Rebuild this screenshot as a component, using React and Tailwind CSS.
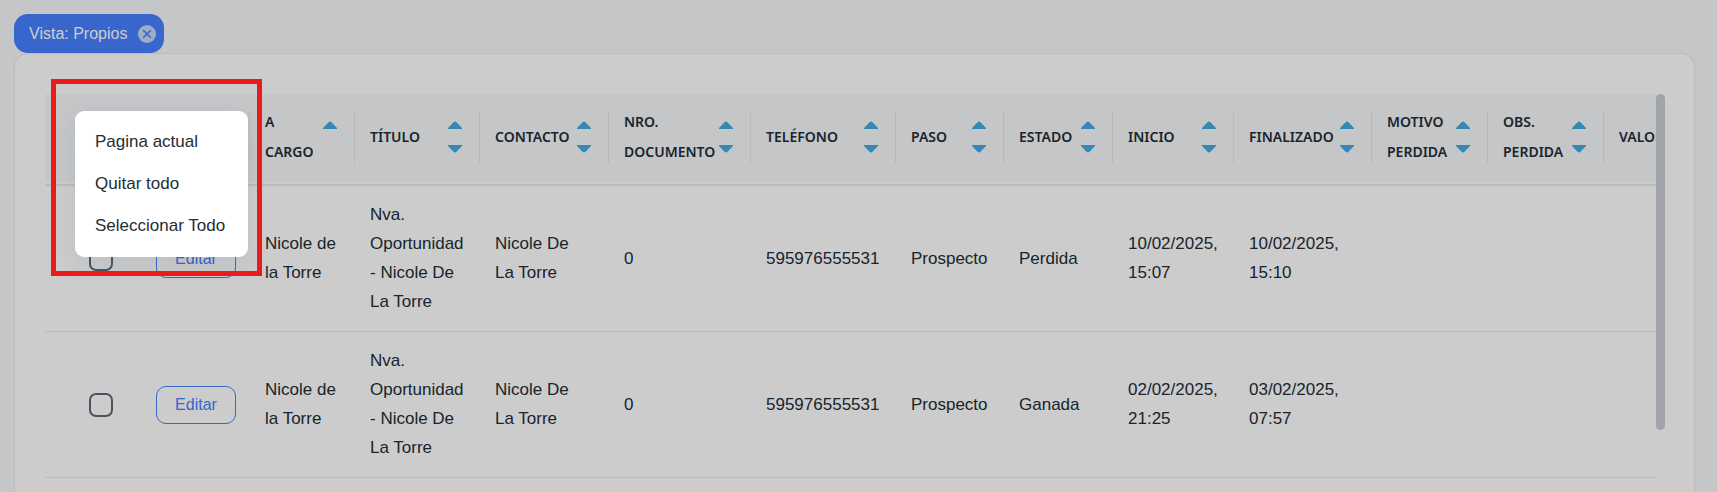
import React from "react";

const columns = [
  { key: "owner", label: "A cargo", width: "w-[105px]", sorted: true },
  { key: "title", label: "Título", width: "w-[125px]" },
  { key: "contact", label: "Contacto", width: "w-[129px]" },
  { key: "document", label: "Nro. documento", width: "w-[142px]" },
  { key: "phone", label: "Teléfono", width: "w-[145px]" },
  { key: "step", label: "Paso", width: "w-[108px]" },
  { key: "state", label: "Estado", width: "w-[109px]" },
  { key: "start", label: "Inicio", width: "w-[121px]" },
  { key: "end", label: "Finalizado", width: "w-[138px]" },
  { key: "lostReason", label: "Motivo perdida", width: "w-[116px]" },
  { key: "lostNote", label: "Obs. perdida", width: "w-[116px]" },
  { key: "value", label: "Valor", width: "w-[116px]" },
];

const rows = [
  {
    id: 1,
    owner: "Nicole de la Torre",
    title: "Nva. Oportunidad - Nicole De La Torre",
    contact: "Nicole De La Torre",
    document: "0",
    phone: "595976555531",
    step: "Prospecto",
    state: "Perdida",
    start: "10/02/2025, 15:07",
    end: "10/02/2025, 15:10",
  },
  {
    id: 2,
    owner: "Nicole de la Torre",
    title: "Nva. Oportunidad - Nicole De La Torre",
    contact: "Nicole De La Torre",
    document: "0",
    phone: "595976555531",
    step: "Prospecto",
    state: "Ganada",
    start: "02/02/2025, 21:25",
    end: "03/02/2025, 07:57",
  },
];

const menuItems = ["Pagina actual", "Quitar todo", "Seleccionar Todo"];

function SortArrows({ sorted }) {
  return (
    <svg
      width="14"
      height="32"
      viewBox="0 0 14 32"
      className="shrink-0 fill-[#42abe3]"
    >
      <path d="M0 8V7L5.5 1.2Q7 -.4 8.5 1.2L14 7V8Z" />
      {!sorted && <path d="M0 24V25L5.5 30.8Q7 32.4 8.5 30.8L14 25V24Z" />}
    </svg>
  );
}

function HeaderCell({ label, sorted }) {
  return (
    <th className="h-22 p-0 text-left align-middle">
      <div className="flex h-[52px] items-center justify-between border-l border-[#e6e9eb] pb-0.5 pl-[15px] pr-[17px]">
        <span className="font-['Noto_Sans',sans-serif] text-sm leading-[30px] font-semibold uppercase">
          {label}
        </span>
        <SortArrows sorted={sorted} />
      </div>
    </th>
  );
}

function Row({ row }) {
  return (
    <tr className="border-b border-[#e8eaec]">
      <td className="pl-11">
        <input
          type="checkbox"
          aria-label={`Seleccionar fila ${row.id}`}
          className="block size-6 appearance-none rounded-[7px] border-2 border-[#5b6b79] bg-transparent"
        />
      </td>
      <td className="pl-4">
        <button className="block h-[38px] w-20 rounded-[10px] border border-[#4680ff] text-base text-[#4680ff]">
          Editar
        </button>
      </td>
      {columns.map((c) => (
        <td key={c.key} className="pt-3.5 pb-[15px] pl-4 pr-[17px] leading-[29px]">
          {row[c.key]}
        </td>
      ))}
    </tr>
  );
}

function SelectionMenu() {
  return (
    <div className="absolute left-[75px] top-[111px] z-20 flex w-[173px] flex-col rounded-[9px] bg-white py-2.5 shadow-[0_8px_24px_rgba(27,46,94,0.08)]">
      {menuItems.map((item) => (
        <button key={item} className="h-[42px] pl-5 text-left">
          {item}
        </button>
      ))}
    </div>
  );
}

export default function App() {
  return (
    <div className="relative flex min-h-screen flex-col overflow-hidden bg-[#f6f8fa] pl-3.5 pr-[22px] pt-3.5 font-['Liberation_Sans',Arial,sans-serif] text-[17px] text-[#232d37]">
      <div className="flex h-[39px] items-center gap-[11px] self-start rounded-[14px] bg-[#4680ff] pl-[15px] pr-2 text-base text-white">
        <span>Vista: Propios</span>
        <button aria-label="Quitar vista" className="block">
          <svg width="18" height="18" viewBox="0 0 18 18">
            <circle cx="9" cy="9" r="9" fill="#c7d7fb" />
            <path
              d="M5.2 5.2 12.8 12.8M12.8 5.2 5.2 12.8"
              stroke="#4680ff"
              strokeWidth="1.6"
            />
          </svg>
        </button>
      </div>

      <div className="flex flex-1 items-start rounded-t-[14px] border border-b-0 border-[#e8eaec] bg-white pl-[30px] pr-[29px] pt-10">
        <div className="min-w-0 flex-1 overflow-hidden">
          <table className="w-[1674px] table-fixed border-collapse">
            <colgroup>
              <col className="w-[95px]" />
              <col className="w-[109px]" />
              {columns.map((c) => (
                <col key={c.key} className={c.width} />
              ))}
            </colgroup>
            <thead>
              <tr className="bg-[#f6f8fa]">
                <td />
                <td />
                {columns.map((c) => (
                  <HeaderCell key={c.key} label={c.label} sorted={c.sorted} />
                ))}
              </tr>
              <tr className="h-[3px] border-b-2 border-[#e6e9eb]">
                <td colSpan={14} className="p-0" />
              </tr>
            </thead>
            <tbody>
              {rows.map((row) => (
                <Row key={row.id} row={row} />
              ))}
            </tbody>
          </table>
        </div>
        <div className="h-84 w-[9px] rounded-full bg-[#c9ced4]" />
      </div>

      {/* backdrop behind the open menu */}
      <div className="absolute inset-0 z-10 bg-black/20" />
      <SelectionMenu />
      <div className="pointer-events-none absolute left-[51px] top-[79px] z-30 h-[197px] w-[211px] border-5 border-[#e81c1c]" />
    </div>
  );
}
